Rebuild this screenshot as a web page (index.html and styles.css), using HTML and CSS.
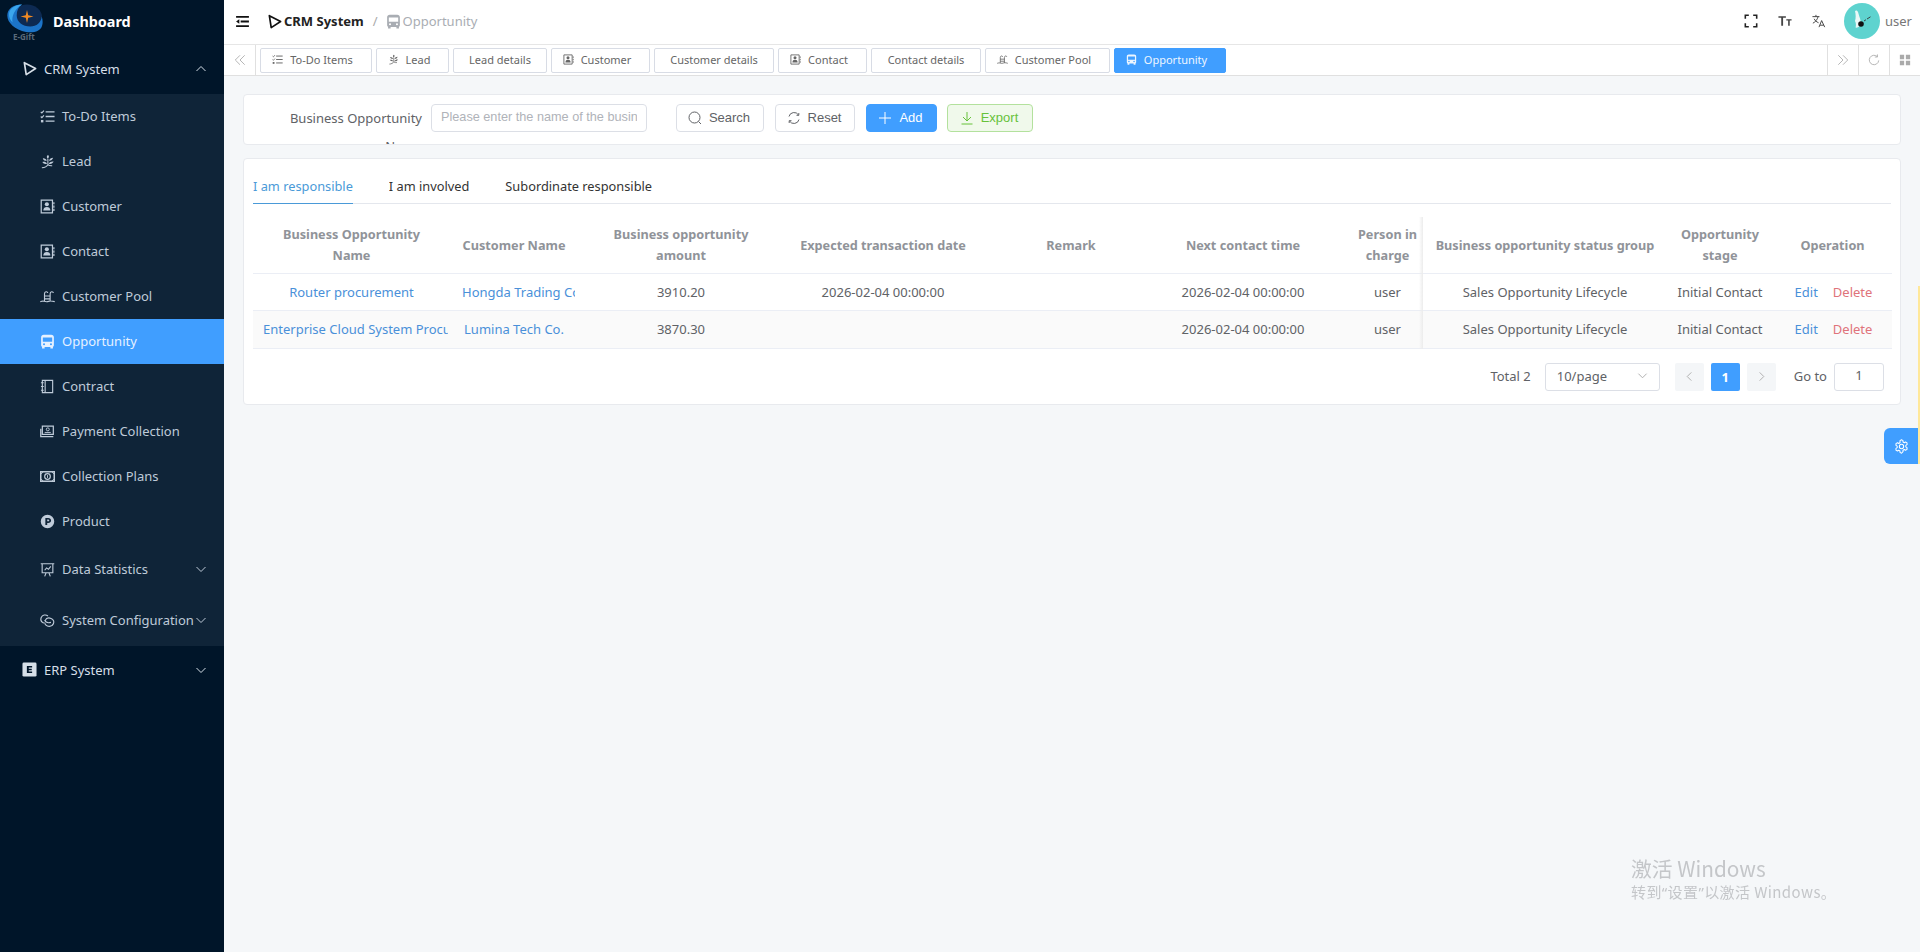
FILE: index.html
```html
<!DOCTYPE html>
<html lang="en">
<head>
  <meta charset="UTF-8">
  <title>Opportunity - CRM System</title>
  <link rel="stylesheet" href="styles.css">
</head>
<body>

  <!-- shared icons -->
  <svg class="icon-defs" xmlns="http://www.w3.org/2000/svg">
    <symbol id="i-play" viewBox="0 0 16 16"><path d="M2.500 1.800 14.500 8 4.500 14.500 2.500 1.800Z" fill="none" stroke="currentColor" stroke-width="1.800" stroke-linejoin="round"/></symbol>
    <symbol id="i-todo" viewBox="0 0 16 16"><path d="M6 3h9.500M6 8h9.500M6 13h9.500" stroke="currentColor" stroke-width="1.400" fill="none"/><path d="M.8 3l1.200 1.200 2.200-2.500M.8 8l1.200 1.200 2.200-2.500" stroke="currentColor" stroke-width="1.200" fill="none"/><rect x="1" y="11.700" width="2.600" height="2.600" fill="currentColor"/></symbol>
    <symbol id="i-lead" viewBox="0 0 16 16"><path d="M8.500 1C7 2 6.800 3.500 8.300 5 9.800 3.500 10 2 8.500 1ZM3 4.500c.5 2 2 3 4.300 2.800C6.800 5.300 5 4.300 3 4.500ZM14 4c-2.200 0-3.800 1-4.500 3.200C11.800 7.300 13.300 6.200 14 4ZM2.500 8.500c1 1.800 2.800 2.500 5 1.800C6.500 8.500 4.500 8 2.500 8.500ZM14.500 8c-2.300-.3-4.200.5-5.200 2.300 2.300.7 4.200 0 5.200-2.300Z" fill="currentColor"/><path d="M8.400 5v6.500c-1 1.800-3.500 3-6.400 3.200" fill="none" stroke="currentColor" stroke-width="1.100"/><path d="M8.400 11.500c1.500 1 3 1.200 4.600 1" fill="none" stroke="currentColor" stroke-width="1.100"/></symbol>
    <symbol id="i-card" viewBox="0 0 16 16"><path d="M1.300 1.300h12v13.400h-12Z" fill="none" stroke="currentColor" stroke-width="1.300"/><path d="M14.800 3.500v2.200M14.800 7v2.200M14.800 10.500v2.200" stroke="currentColor" stroke-width="1.300"/><circle cx="7.300" cy="5.600" r="2.200" fill="currentColor"/><path d="M3.500 12.300c0-2.800 1.700-3.800 3.800-3.800s3.800 1 3.800 3.800Z" fill="currentColor"/></symbol>
    <symbol id="i-pool" viewBox="0 0 16 16"><path d="M.3 13.500c1.700 0 2-1 3.700-.5s3 1 5 .2 3.500-.6 6.700.3M4.800 13V5C4.800 2.300 8 2.300 8.300 4.300M10.800 13V5c0-2.700 3.200-2.700 3.500-.7M4.800 7.500h6M4.800 10.500h6" fill="none" stroke="currentColor" stroke-width="1.200"/></symbol>
    <symbol id="i-bus" viewBox="0 0 16 16"><path d="M4 .8h8c1.700 0 2.800 1.100 2.800 2.700V12c0 .8-.4 1.400-1 1.700V15.500h-2.700v-1.600H4.900v1.600H2.200v-1.800c-.6-.3-1-.9-1-1.700V3.500C1.200 1.900 2.300.8 4 .8Zm-1 3v4.500h10V3.800Zm1.300 6a1.100 1.100 0 1 0 0 2.200 1.100 1.100 0 0 0 0-2.200Zm7.400 0a1.100 1.100 0 1 0 0 2.200 1.100 1.100 0 0 0 0-2.200Z" fill="currentColor" fill-rule="evenodd"/></symbol>
    <symbol id="i-book" viewBox="0 0 16 16"><path d="M2.500 1.500h11v13h-11ZM5.500 1.500v13M1 4h3M1 8h3M1 12h3" fill="none" stroke="currentColor" stroke-width="1.200"/></symbol>
    <symbol id="i-pay" viewBox="0 0 16 16"><path d="M2.500 2.200h11.700v8.800H2.500ZM.8 5v8.500h13.400" fill="none" stroke="currentColor" stroke-width="1.300"/><circle cx="8.300" cy="5.700" r="1.600" fill="none" stroke="currentColor"/><path d="M5 9h6.500" stroke="currentColor"/></symbol>
    <symbol id="i-cash" viewBox="0 0 16 16"><path d="M.8 3h14.400v10H.8Z" fill="none" stroke="currentColor" stroke-width="1.600"/><circle cx="8" cy="8" r="3" fill="none" stroke="currentColor" stroke-width="1.300"/><path d="M8 6.500v3" stroke="currentColor"/><path d="M1 5.500 3.500 3M1 10.500 3.500 13M15 5.500 12.500 3M15 10.500 12.500 13" stroke="currentColor"/></symbol>
    <symbol id="i-product" viewBox="0 0 16 16"><path d="M8 .8a7.200 7.200 0 1 1 0 14.400A7.200 7.200 0 0 1 8 .8ZM5.700 4.200v7.600h2V9.500h1.100c1.800 0 3-1.100 3-2.650s-1.200-2.650-3-2.650Zm2 1.700h1c.8 0 1.200.4 1.200.95s-.4.950-1.200.950h-1Z" fill="currentColor" fill-rule="evenodd"/></symbol>
    <symbol id="i-chart" viewBox="0 0 16 16"><path d="M.8 1.800h14.400M2.300 1.800v9.700h11.400V1.800M5 15.300l1.500-3.800M11 15.300l-1.500-3.800M5 8.800l2-2.500 2 1.500 2.500-3.200" fill="none" stroke="currentColor" stroke-width="1.200"/></symbol>
    <symbol id="i-link" viewBox="0 0 16 16"><path d="M8.500 3.200C6 1.200 2.500 2 1.300 4.800c-1 2.700.3 5 2.700 6M5.500 8c1-2.200 3.700-3.200 6.300-2.200 2.700 1.100 3.500 3.700 2.400 5.800-1.100 2.200-3.900 3.200-6.400 2.200-1.700-.7-2.800-2-2.900-3.600M5 7.500c1 2.700 4 3.200 6.700 2.500" fill="none" stroke="currentColor" stroke-width="1.200"/></symbol>
    <symbol id="i-erp" viewBox="0 0 16 16"><rect x=".5" y=".5" width="15" height="15" rx="1.500" fill="currentColor"/><path d="M5.200 4.200h5.600v1.600H7.200v1.400h3.200v1.500H7.200v1.500h3.600v1.600H5.200Z" fill="#001529"/></symbol>
    <symbol id="i-down" viewBox="0 0 12 12"><path d="M1.500 4 6 8.500 10.500 4" fill="none" stroke="currentColor" stroke-width="1"/></symbol>
    <symbol id="i-left" viewBox="0 0 12 12"><path d="M8 1.500 3.500 6 8 10.500" fill="none" stroke="currentColor" stroke-width="1"/></symbol>
    <symbol id="i-right" viewBox="0 0 12 12"><path d="M4 1.500 8.500 6 4 10.500" fill="none" stroke="currentColor" stroke-width="1"/></symbol>
    <symbol id="i-dleft" viewBox="0 0 14 14"><path d="M7 1.500 1.500 7 7 12.500M12.500 1.500 7 7l5.500 5.500" fill="none" stroke="currentColor" stroke-width="1"/></symbol>
    <symbol id="i-dright" viewBox="0 0 14 14"><path d="M7 1.500 12.500 7 7 12.500M1.500 1.500 7 7l-5.500 5.500" fill="none" stroke="currentColor" stroke-width="1"/></symbol>
  </svg>

  <div class="app">

    <!-- SIDEBAR -->
    <aside class="sidebar">
      <div class="brand">
        <svg class="logo" viewBox="0 0 36 29" xmlns="http://www.w3.org/2000/svg">
          <ellipse cx="20" cy="13" rx="15" ry="12.500" fill="#0d2a52"/>
          <path d="M15 .5C6 .5.3 5 .3 11.500.3 19 8 25.500 19 28c8 1.200 14.500-1 16-6 1-3 .8-6-.3-9.500-.5 6-5 10-11.500 10-7.500 0-13.500-4.500-13.500-11C9.700 6.500 11.500 3 15 .5Z" fill="#1c74c8"/>
          <path d="M15 .5C7 1 2 5 2 10.500c0 3 1.300 5.500 3.500 8C4.500 12 7.500 5 15 .5Z" fill="#3ba6ec"/>
          <path d="M20 6l1.200 5.300 5.300 1.200-5.300 1.200L20 19l-1.200-5.300-5.300-1.200 5.300-1.200Z" fill="#f08a24"/>
        </svg>
        <span class="logo-text">E-Gift</span>
        <span class="brand-name">Dashboard</span>
      </div>

      <div class="menu-top">
        <svg class="menu-icon"><use href="#i-play"/></svg>
        <span>CRM System</span>
        <svg class="menu-arrow arrow-up"><use href="#i-down"/></svg>
      </div>

      <div class="submenu">
        <div class="menu-item"><svg class="menu-icon"><use href="#i-todo"/></svg><span>To-Do Items</span></div>
        <div class="menu-item"><svg class="menu-icon"><use href="#i-lead"/></svg><span>Lead</span></div>
        <div class="menu-item"><svg class="menu-icon"><use href="#i-card"/></svg><span>Customer</span></div>
        <div class="menu-item"><svg class="menu-icon"><use href="#i-card"/></svg><span>Contact</span></div>
        <div class="menu-item"><svg class="menu-icon"><use href="#i-pool"/></svg><span>Customer Pool</span></div>
        <div class="menu-item active"><svg class="menu-icon"><use href="#i-bus"/></svg><span>Opportunity</span></div>
        <div class="menu-item"><svg class="menu-icon"><use href="#i-book"/></svg><span>Contract</span></div>
        <div class="menu-item"><svg class="menu-icon"><use href="#i-pay"/></svg><span>Payment Collection</span></div>
        <div class="menu-item"><svg class="menu-icon"><use href="#i-cash"/></svg><span>Collection Plans</span></div>
        <div class="menu-item"><svg class="menu-icon"><use href="#i-product"/></svg><span>Product</span></div>
        <div class="menu-item group"><svg class="menu-icon"><use href="#i-chart"/></svg><span>Data Statistics</span><svg class="menu-arrow"><use href="#i-down"/></svg></div>
        <div class="menu-item group"><svg class="menu-icon"><use href="#i-link"/></svg><span>System Configuration</span><svg class="menu-arrow"><use href="#i-down"/></svg></div>
      </div>

      <div class="menu-top menu-last">
        <svg class="menu-icon"><use href="#i-erp"/></svg>
        <span>ERP System</span>
        <svg class="menu-arrow"><use href="#i-down"/></svg>
      </div>
    </aside>

    <div class="main">

      <!-- HEADER -->
      <header class="navbar">
        <svg class="hamburger" viewBox="0 0 14 12" xmlns="http://www.w3.org/2000/svg">
          <path d="M0 0h14v2H0ZM5 5h9v2H5ZM0 10h14v2H0Z" fill="#111"/><path d="M3.500 3.500v5L0 6Z" fill="#111"/>
        </svg>
        <div class="crumbs">
          <svg class="crumb-icon"><use href="#i-play"/></svg>
          <span class="crumb-main">CRM System</span>
          <span class="crumb-sep">/</span>
          <svg class="crumb-icon crumb-muted"><use href="#i-bus"/></svg>
          <span class="crumb-muted">Opportunity</span>
        </div>
        <div class="nav-tools">
          <svg class="tool" viewBox="0 0 16 16" xmlns="http://www.w3.org/2000/svg"><path d="M1.500 5.500v-4h4M10.500 1.500h4v4M14.500 10.500v4h-4M5.500 14.500h-4v-4" fill="none" stroke="#222" stroke-width="1.800"/></svg>
          <svg class="tool" viewBox="0 0 16 16" xmlns="http://www.w3.org/2000/svg"><path d="M.5 2.500h8.500v1.800H5.800V13.500H3.700V4.300H.5ZM9.500 6h6v1.500h-2.100v6h-1.800v-6H9.500Z" fill="#444"/></svg>
          <svg class="tool tool-last" viewBox="0 0 16 16" xmlns="http://www.w3.org/2000/svg"><path d="M.5 3h8M4.500 1v2M7 3C6 6.500 4 9 1 10.500M2.500 5.500C3.500 7.500 5 9 7.500 10M8 15l3-7.500L14.500 15M9.200 12.800h4.200" fill="none" stroke="#444" stroke-width="1.100"/></svg>
          <div class="user">
            <svg class="avatar" viewBox="0 0 36 36" xmlns="http://www.w3.org/2000/svg">
              <circle cx="18" cy="18" r="18" fill="#5ed3cf"/>
              <path d="M11 8c1-1 2.500-.5 3 1l1.500 5c1 2 1.500 5 1 8-1.500 2-3.500 3-5 2.500.8-2 .5-4.500-.5-6.500 1-3 .8-6.500 0-10Z" fill="#e9f8f7"/>
              <circle cx="17" cy="21" r="2.800" fill="#111"/>
              <path d="M20 18l2-1.300M23 16l3.500-2.200" stroke="#333" stroke-width=".9"/>
            </svg>
            <span>user</span>
          </div>
        </div>
      </header>

      <!-- VISITED TABS -->
      <div class="tagsbar">
        <div class="tags-btn tags-btn-left"><svg class="tags-arrow"><use href="#i-dleft"/></svg></div>
        <div class="tags">
          <div class="tag has-icon w-todo"><svg class="tag-icon"><use href="#i-todo"/></svg>To-Do Items</div>
          <div class="tag has-icon w-lead"><svg class="tag-icon"><use href="#i-lead"/></svg>Lead</div>
          <div class="tag w-leaddet">Lead details</div>
          <div class="tag has-icon w-cust"><svg class="tag-icon"><use href="#i-card"/></svg>Customer</div>
          <div class="tag w-custdet">Customer details</div>
          <div class="tag has-icon w-cont"><svg class="tag-icon"><use href="#i-card"/></svg>Contact</div>
          <div class="tag w-contdet">Contact details</div>
          <div class="tag has-icon w-pool"><svg class="tag-icon"><use href="#i-pool"/></svg>Customer Pool</div>
          <div class="tag has-icon w-opp active"><svg class="tag-icon"><use href="#i-bus"/></svg>Opportunity</div>
        </div>
        <div class="tags-btn"><svg class="tags-arrow"><use href="#i-dright"/></svg></div>
        <div class="tags-btn">
          <svg class="tags-tool" viewBox="0 0 14 14" xmlns="http://www.w3.org/2000/svg"><path d="M12.500 7.500A5.500 5.500 0 1 1 10.800 3M11 .5v3H8" fill="none" stroke="#aaa" stroke-width="1"/></svg>
        </div>
        <div class="tags-btn">
          <svg class="tags-tool" viewBox="0 0 14 14" xmlns="http://www.w3.org/2000/svg"><path d="M1 1h5v5H1ZM8 1h5v5H8ZM1 8h5v5H1ZM8 8h5v5H8Z" fill="#aaa"/></svg>
        </div>
      </div>

      <!-- PAGE -->
      <main class="page">

        <section class="card search-card">
          <label class="search-label">Business Opportunity Name</label>
          <input class="search-input" type="text" placeholder="Please enter the name of the business opportunity">
          <button class="btn btn-search">
            <svg class="btn-icon" viewBox="0 0 14 14" xmlns="http://www.w3.org/2000/svg"><circle cx="6.500" cy="6.500" r="5.500" fill="none" stroke="currentColor"/><path d="M10.500 10.500 13 13" stroke="currentColor"/></svg>Search
          </button>
          <button class="btn btn-reset">
            <svg class="btn-icon" viewBox="0 0 14 14" xmlns="http://www.w3.org/2000/svg"><path d="M2 5.500A5.200 5.200 0 0 1 11.500 4M12 8.500A5.200 5.200 0 0 1 2.500 10M9.500 4.300h2.300V2M4.500 9.700H2.200V12" fill="none" stroke="currentColor"/></svg>Reset
          </button>
          <button class="btn btn-add">
            <svg class="btn-icon" viewBox="0 0 14 14" xmlns="http://www.w3.org/2000/svg"><path d="M7 1v12M1 7h12" stroke="currentColor"/></svg>Add
          </button>
          <button class="btn btn-export">
            <svg class="btn-icon" viewBox="0 0 14 14" xmlns="http://www.w3.org/2000/svg"><path d="M7 1v8.500M3 6l4 4 4-4M1.500 13h11" fill="none" stroke="currentColor"/></svg>Export
          </button>
        </section>

        <section class="card table-card">
          <div class="subtabs">
            <div class="subtab active">I am responsible</div>
            <div class="subtab">I am involved</div>
            <div class="subtab">Subordinate responsible</div>
          </div>

          <div class="table-wrap">
            <table class="grid">
              <colgroup>
                <col class="c-name"><col class="c-cust"><col class="c-amount"><col class="c-date"><col class="c-remark"><col class="c-next"><col class="c-person"><col class="c-status"><col class="c-stage"><col class="c-op">
              </colgroup>
              <thead>
                <tr>
                  <th class="wrap-name">Business Opportunity Name</th>
                  <th>Customer Name</th>
                  <th class="wrap-amount">Business opportunity amount</th>
                  <th>Expected transaction date</th>
                  <th>Remark</th>
                  <th>Next contact time</th>
                  <th class="person">Person in charge</th>
                  <th>Business opportunity status group</th>
                  <th>Opportunity stage</th>
                  <th>Operation</th>
                </tr>
              </thead>
              <tbody>
                <tr>
                  <td class="link">Router procurement</td>
                  <td class="link cust-cell"><div class="clip-text">Hongda Trading Co., Ltd.</div></td>
                  <td>3910.20</td>
                  <td>2026-02-04 00:00:00</td>
                  <td></td>
                  <td>2026-02-04 00:00:00</td>
                  <td class="person">user</td>
                  <td>Sales Opportunity Lifecycle</td>
                  <td>Initial Contact</td>
                  <td class="op"><span class="op-edit">Edit</span><span class="op-del">Delete</span></td>
                </tr>
                <tr class="striped">
                  <td class="link name-cell"><div class="clip-text">Enterprise Cloud System Procurement</div></td>
                  <td class="link">Lumina Tech Co.</td>
                  <td>3870.30</td>
                  <td></td>
                  <td></td>
                  <td>2026-02-04 00:00:00</td>
                  <td class="person">user</td>
                  <td>Sales Opportunity Lifecycle</td>
                  <td>Initial Contact</td>
                  <td class="op"><span class="op-edit">Edit</span><span class="op-del">Delete</span></td>
                </tr>
              </tbody>
            </table>
            <div class="fixed-shade"></div>
          </div>

          <div class="pager">
            <span class="pager-total">Total 2</span>
            <div class="pager-size"><span>10/page</span><svg class="pager-arrow"><use href="#i-down"/></svg></div>
            <div class="pager-btn prev"><svg class="pager-chev"><use href="#i-left"/></svg></div>
            <div class="pager-btn current">1</div>
            <div class="pager-btn next"><svg class="pager-chev"><use href="#i-right"/></svg></div>
            <span class="pager-goto">Go to</span>
            <div class="pager-input">1</div>
          </div>
        </section>

      </main>
    </div>
  </div>

  <div class="edge-mark"></div>

  <!-- settings drawer handle -->
  <div class="settings-btn">
    <svg viewBox="0 0 16 16" xmlns="http://www.w3.org/2000/svg"><path d="M8 .8l1.600.9v1.500l1.400.8 1.300-.8 1.600.9v1.900l-1.300.8v1.600l1.300.8v1.900l-1.600.9-1.300-.8-1.400.8v1.500L8 15.200l-1.600-.9v-1.500L5 12l-1.300.8-1.600-.9V10l1.300-.8V7.600L2.100 6.800V4.900l1.600-.9L5 4.800l1.400-.8V1.700Z" fill="none" stroke="#fff" stroke-width="1.100" stroke-linejoin="round"/><circle cx="8" cy="8" r="2.300" fill="none" stroke="#fff" stroke-width="1.100"/></svg>
  </div>

  <div class="watermark">
    <div class="wm-title">激活 Windows</div>
    <div class="wm-sub">转到<span class="wm-quote">“</span>设置<span class="wm-quote">”</span>以激活 Windows。</div>
  </div>

</body>
</html>
```

FILE: styles.css
```css
* {
  box-sizing: border-box;
}

html, body {
  height: 100%;
}

body {
  margin: 0;
  font-family: "Noto Sans", "Noto Sans CJK SC", sans-serif;
  font-size: 13px;
  color: #606266;
  background: #f5f7f9;
  overflow: hidden;
}

.icon-defs {
  display: none;
}

.app {
  display: flex;
  height: 100%;
}

/* Sidebar */
.sidebar {
  width: 224px;
  flex: none;
  background: #001529;
  color: #bfcbd9;
}

.brand {
  position: relative;
  height: 44px;
  display: flex;
  align-items: center;
  padding: 0 0 2px 53px;
}

.logo {
  position: absolute;
  left: 7px;
  top: 4px;
  width: 36px;
  height: 29px;
}

.logo-text {
  position: absolute;
  left: 13px;
  top: 32px;
  font-size: 8px;
  line-height: 9px;
  font-weight: 700;
  color: #5b6b7b;
}

.brand-name {
  color: #fff;
  font-size: 14.4px;
  font-weight: 700;
}

.menu-top {
  height: 50px;
  display: flex;
  align-items: center;
  padding: 0 0 1px 22px;
  color: #d6dfe8;
}

.menu-last {
  padding-bottom: 3px;
}

.menu-icon {
  width: 15px;
  height: 15px;
  flex: none;
  margin-right: 7px;
}

.menu-arrow {
  width: 12px;
  height: 12px;
  margin-left: auto;
  margin-right: 17px;
  flex: none;
}

.arrow-up {
  transform: rotate(180deg);
}

.submenu {
  background: #0f2438;
}

.menu-item {
  height: 45px;
  display: flex;
  align-items: center;
  padding: 0 0 1px 40px;
  white-space: nowrap;
}

.menu-item.active {
  background: #409eff;
  color: #e6f1ff;
}

.menu-item.group {
  height: 51px;
}

/* Header */
.main {
  flex: 1;
  min-width: 0;
  display: flex;
  flex-direction: column;
}

.navbar {
  height: 45px;
  flex: none;
  display: flex;
  align-items: center;
  background: #fff;
  border-bottom: 1px solid #e6e6e6;
  padding: 0 0 2px 12px;
}

.hamburger {
  width: 13px;
  height: 11px;
  margin-right: 18px;
}

.crumbs {
  display: flex;
  align-items: center;
}

.crumb-icon {
  width: 15px;
  height: 15px;
  margin-right: 2px;
  color: #111;
}

.crumb-main {
  font-weight: 700;
  color: #222;
}

.crumb-sep {
  margin: 0 8px 0 9px;
  color: #aaa;
}

.crumb-muted {
  color: #a9adb3;
}

.nav-tools {
  margin-left: auto;
  display: flex;
  align-items: center;
  padding-right: 8px;
}

.tool {
  width: 14px;
  height: 14px;
  margin-right: 20px;
}

.tool-last {
  margin-right: 18px;
}

.user {
  display: flex;
  align-items: center;
  color: #777;
}

.avatar {
  width: 36px;
  height: 36px;
  margin-right: 5px;
}

/* Visited tabs */
.tagsbar {
  height: 31px;
  flex: none;
  display: flex;
  background: #fff;
  border-bottom: 1px solid #e0e0e0;
}

.tags {
  flex: 1;
  display: flex;
  align-items: center;
  gap: 4px;
  padding-left: 4px;
}

.tag {
  height: 25px;
  display: flex;
  align-items: center;
  justify-content: center;
  border: 1px solid #d8dce5;
  border-radius: 2px;
  padding-bottom: 2px;
  font-size: 11px;
  color: #666;
  white-space: nowrap;
}

.tag.has-icon {
  padding-right: 7px;
}

.tag.active {
  background: #409eff;
  border-color: #409eff;
  color: #eef6ff;
}

.tag-icon {
  width: 11px;
  height: 11px;
  margin-right: 7px;
}

.w-todo { width: 112px; }
.w-lead { width: 73px; }
.w-leaddet { width: 94px; }
.w-cust { width: 99px; }
.w-custdet { width: 120px; }
.w-cont { width: 89px; }
.w-contdet { width: 110px; }
.w-pool { width: 125px; }
.w-opp { width: 112px; }

.tags-btn {
  width: 31px;
  flex: none;
  display: flex;
  align-items: center;
  justify-content: center;
  border-left: 1px solid #e0e0e0;
}

.tags-btn-left {
  width: 32px;
  border-left: none;
  border-right: 1px solid #e0e0e0;
}

.tags-arrow {
  width: 12px;
  height: 12px;
  color: #aaa;
}

.tags-tool {
  width: 12px;
  height: 12px;
}

/* Page */
.page {
  flex: 1;
  padding: 18px 19px 0;
}

.card {
  background: #fff;
  border: 1px solid #e8eaee;
  border-radius: 4px;
}

.search-card {
  height: 51px;
  display: flex;
  align-items: flex-start;
  overflow: hidden;
  padding-top: 9px;
  margin-bottom: 13px;
}

.search-label {
  width: 178px;
  flex: none;
  text-align: right;
  line-height: 28px;
  margin-right: 9px;
  padding-left: 30px;
}

.search-input {
  width: 216px;
  height: 28px;
  flex: none;
  border: 1px solid #dcdfe6;
  border-radius: 4px;
  padding: 0 9px 2px;
  font-family: "Liberation Sans", Arial, sans-serif;
  font-size: 12.7px;
  outline: none;
  margin-right: 29px;
}

.search-input::placeholder {
  color: #b0b3b9;
}

.btn {
  height: 28px;
  flex: none;
  display: flex;
  align-items: center;
  justify-content: center;
  border: 1px solid #dcdfe6;
  border-radius: 4px;
  background: #fff;
  color: #606266;
  font-family: "Liberation Sans", Arial, sans-serif;
  font-size: 13px;
  padding: 0 2px 1px 0;
  margin-right: 11px;
}

.btn-icon {
  width: 14px;
  height: 14px;
  margin-right: 7px;
}

.btn-search { width: 88px; }
.btn-reset { width: 80px; }

.btn-add {
  width: 71px;
  background: #409eff;
  border-color: #409eff;
  color: #fff;
  margin-right: 10px;
}

.btn-export {
  width: 86px;
  background: #f0f9eb;
  border-color: #b3e19d;
  color: #67c23a;
}

/* Table card */
.table-card {
  height: 247px;
  padding: 0 9px;
}

.subtabs {
  height: 45px;
  display: flex;
  border-bottom: 1px solid #e4e7ed;
  color: #333;
  font-size: 12.8px;
}

.subtab {
  line-height: 54px;
  height: 45px;
  margin-right: 36px;
  overflow: hidden;
}

.subtab.active {
  color: #4a9ad8;
  border-bottom: 1px solid #4a9ad8;
}

.table-wrap {
  position: relative;
}

.grid {
  width: 1639px;
  table-layout: fixed;
  border-collapse: collapse;
  font-size: 13px;
}

.c-name { width: 197px; }
.c-cust { width: 128px; }
.c-amount { width: 206px; }
.c-date { width: 198px; }
.c-remark { width: 178px; }
.c-next { width: 166px; }
.c-person { width: 97px; }
.c-status { width: 244px; }
.c-stage { width: 106px; }
.c-op { width: 119px; }

.grid th {
  height: 69px;
  padding: 14px 4px 0;
  font-size: 12.7px;
  font-weight: 700;
  line-height: 21px;
  color: #909399;
  border-bottom: 1px solid #ebeef5;
}

.grid th.wrap-name {
  padding-left: 20px;
  padding-right: 20px;
}

.grid th.wrap-amount {
  padding-left: 24px;
  padding-right: 24px;
}

.grid td {
  height: 37px;
  padding: 0 4px;
  text-align: center;
  white-space: nowrap;
  color: #606266;
  border-bottom: 1px solid #ebeef5;
}

.grid .person {
  padding-left: 26px;
  padding-right: 0;
}

.grid .link {
  color: #4a90d9;
}

.clip-text {
  overflow: hidden;
  text-align: left;
}

.grid .name-cell {
  padding-left: 10px;
  padding-right: 2px;
}

.grid .cust-cell {
  padding-left: 12px;
  padding-right: 3px;
}

.grid .op {
  padding-left: 6px;
}

.striped td {
  height: 38px;
  background: #fafafa;
}

.op-edit {
  color: #4a90d9;
  margin-right: 15px;
}

.op-del {
  color: #e0737a;
}

.fixed-shade {
  position: absolute;
  left: 1166px;
  top: 13px;
  bottom: 0;
  width: 4px;
  background: linear-gradient(to right, transparent, #ececec);
}

/* Pager */
.pager {
  height: 56px;
  display: flex;
  align-items: center;
  justify-content: flex-end;
  font-size: 13px;
  padding-right: 7px;
}

.pager-total {
  margin-right: 14px;
  padding-bottom: 1px;
}

.pager-size {
  width: 115px;
  height: 28px;
  display: flex;
  align-items: center;
  justify-content: space-between;
  border: 1px solid #dcdfe6;
  border-radius: 3px;
  padding: 0 11px 2px;
  margin-right: 15px;
}

.pager-arrow {
  width: 11px;
  height: 11px;
  color: #aaa;
}

.pager-btn {
  width: 29px;
  height: 28px;
  display: flex;
  align-items: center;
  justify-content: center;
  background: #f4f6f8;
  border-radius: 2px;
  margin-right: 7px;
}

.pager-btn.current {
  background: #409eff;
  color: #fff;
  font-weight: 700;
}

.pager-btn.next {
  margin-right: 18px;
}

.pager-chev {
  width: 11px;
  height: 11px;
  color: #aaa;
}

.pager-goto {
  margin-right: 7px;
  padding-bottom: 1px;
}

.pager-input {
  width: 50px;
  height: 28px;
  border: 1px solid #dcdfe6;
  border-radius: 3px;
  text-align: center;
  line-height: 23px;
}

/* Overlays */
.edge-mark {
  position: fixed;
  right: 0;
  top: 286px;
  width: 2px;
  height: 178px;
  background: #ffe89a;
}

.settings-btn {
  position: fixed;
  right: 2px;
  top: 428px;
  width: 34px;
  height: 36px;
  display: flex;
  align-items: center;
  justify-content: center;
  background: #409eff;
  border-radius: 6px 0 0 6px;
}

.settings-btn svg {
  width: 15px;
  height: 15px;
}

.watermark {
  position: fixed;
  left: 1631px;
  top: 854px;
  color: #c4c6c9;
  font-family: "Noto Sans CJK SC", "Noto Sans", sans-serif;
}

.wm-title {
  font-size: 20.8px;
  line-height: 28px;
}

.wm-sub {
  font-size: 15px;
  line-height: 20px;
  letter-spacing: .4px;
}

.wm-quote {
  font-family: "Noto Sans", sans-serif;
}
```
